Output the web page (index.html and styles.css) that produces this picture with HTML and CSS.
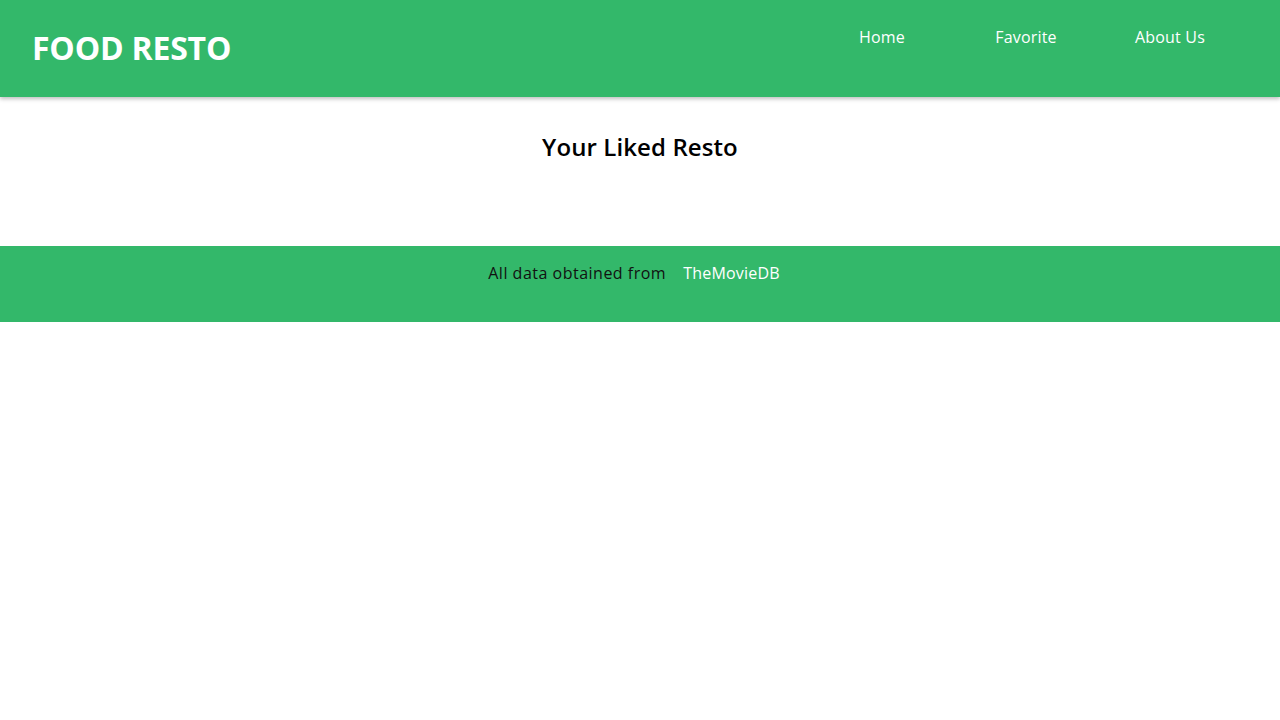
FILE: index.html
```html
<!DOCTYPE html>
<html lang="en">
<head>
<meta charset="utf-8">
<title>Food Resto</title>
<link rel="stylesheet" href="styles.css">
</head>
<body>
<header class="app-bar">
  <h1 class="brand">FOOD RESTO</h1>
  <nav class="nav">
    <ul class="nav-list">
      <li class="nav-item"><a href="#" class="nav-link">Home</a></li>
      <li class="nav-item"><a href="#" class="nav-link">Favorite</a></li>
      <li class="nav-item"><a href="#" class="nav-link">About Us</a></li>
    </ul>
  </nav>
</header>
<main class="content">
  <h2 class="content-title">Your Liked Resto</h2>
</main>
<footer class="footer">
  <p class="footer-text"><span class="footer-label">All data obtained from</span><a href="#" class="footer-link">TheMovieDB</a></p>
</footer>
</body>
</html>
```
FILE: styles.css
```css
* { box-sizing: border-box; }
html, body { margin: 0; padding: 0; }
body {
  font-family: "Open Sans", "DejaVu Sans", sans-serif;
  background: #ffffff;
  color: #000;
}
.app-bar {
  height: 97px;
  background: #33b86a;
  display: flex;
  justify-content: space-between;
  align-items: flex-start;
  padding: 0 38px 0 32px;
  box-shadow: 0 2px 4px rgba(0,0,0,0.25);
  position: relative;
  z-index: 1;
}
.brand {
  margin: 0;
  padding-top: 28px;
  font-size: 32px;
  font-weight: 700;
  line-height: 40px;
  color: #fff;
  letter-spacing: -0.2px;
}
.nav-list {
  list-style: none;
  margin: 0;
  padding: 26px 0 0;
  display: flex;
}
.nav-item {
  width: 144px;
  text-align: center;
}
.nav-link {
  color: #fff;
  text-decoration: none;
  font-size: 16px;
  line-height: 22px;
  letter-spacing: 0.2px;
}
.content {
  height: 149px;
  padding-top: 30px;
}
.content-title {
  margin: 0;
  text-align: center;
  font-size: 24px;
  font-weight: 600;
  line-height: 40px;
  letter-spacing: 0.1px;
}
.footer {
  height: 76px;
  background: #33b86a;
  padding-top: 16px;
}
.footer-text {
  margin: 0;
  text-align: center;
  font-size: 16px;
  line-height: 22px;
  color: #111;
}
.footer-label {
  letter-spacing: 0.5px;
}
.footer-link {
  color: #fff;
  text-decoration: none;
  margin-left: 17px;
  padding-right: 12px;
  letter-spacing: 0.2px;
}
```
